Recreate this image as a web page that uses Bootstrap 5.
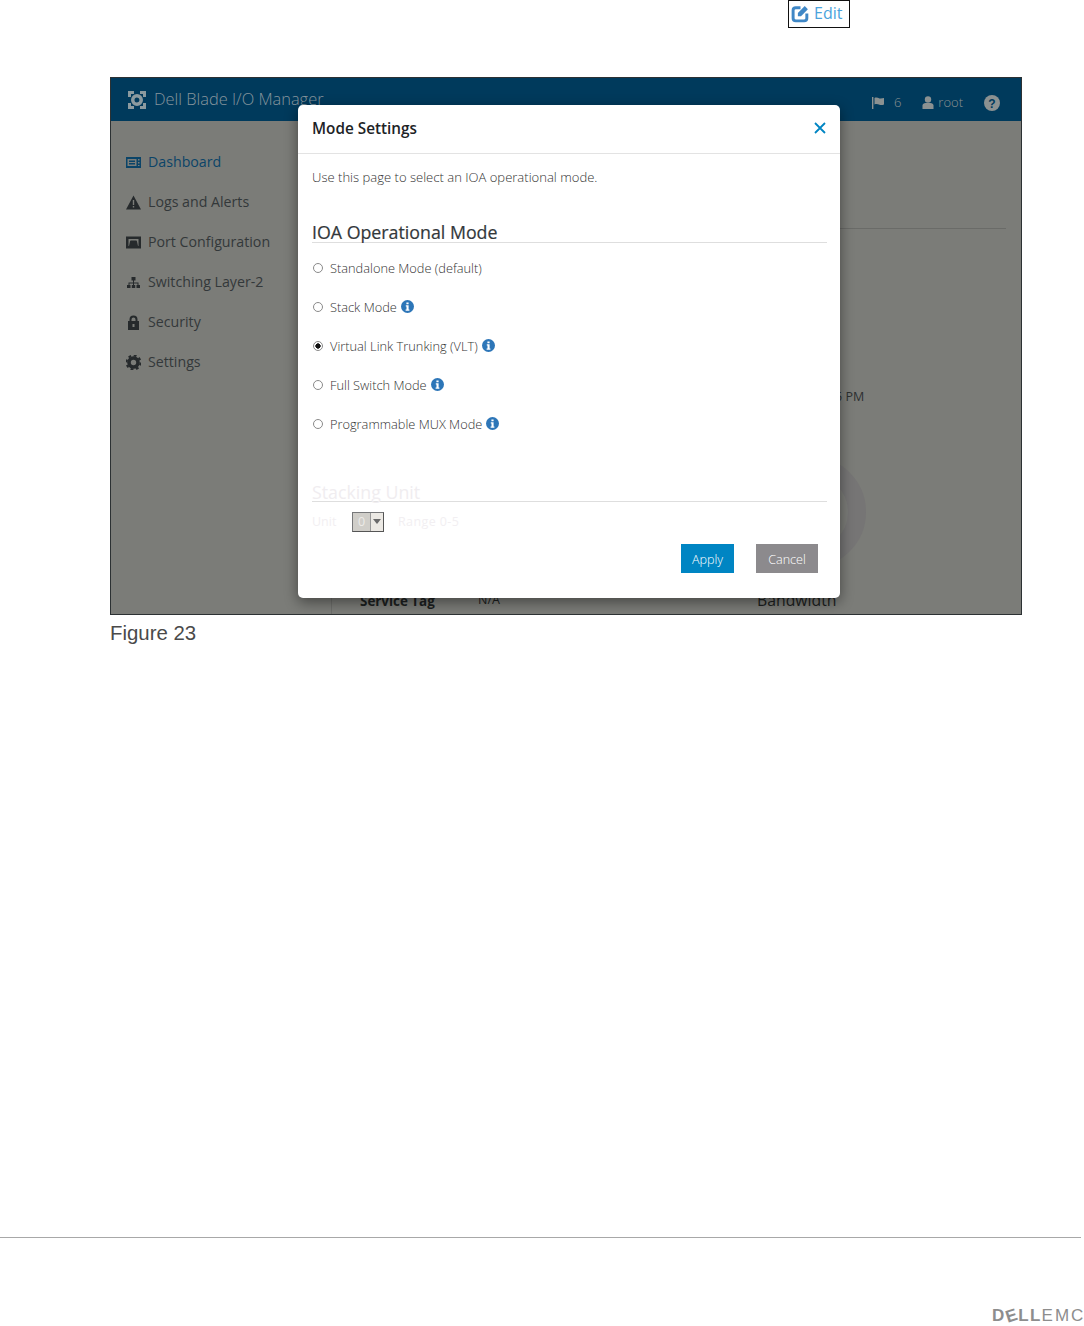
<!DOCTYPE html>
<html lang="en">
<head>
    <meta charset="UTF-8">
    <meta name="viewport" content="width=device-width, initial-scale=1.0">
    <title>Mode Settings</title>
    <link href="https://cdn.jsdelivr.net/npm/bootstrap@5.3.0/dist/css/bootstrap.min.css" rel="stylesheet">
    <style>
        body {
            background: #fff;
            font-family: "Open Sans", "Liberation Sans", sans-serif;
            font-size: 12px;
            font-weight: 300;
            color: #444;
        }
        .doc-page { height: 1326px; overflow: hidden; }

        /* top of the page, cropped edit button */
        .edit-row { height: 77px; padding-left: 788px; }
        .edit-box {
            width: 62px; height: 28px;
            border: 1px solid #111;
            color: #4aa3dc;
            font-size: 16px;
            font-weight: 400;
            gap: 4px;
            padding: 0 0 2px 2px;
        }

        /* screenshot figure */
        .shot {
            position: relative;
            margin-left: 110px;
            width: 912px; height: 538px;
            border: 1px solid #2c3133;
            background: #7b7c78;
            overflow: hidden;
        }
        .shot-head {
            height: 43px;
            background: #003a5c;
            color: #86959c;
            padding: 0 21px 0 17px;
        }
        .shot-title { font-size: 16.4px; margin-left: 8px; }
        .shot-tools { gap: 21px; font-size: 13px; color: #8b9191; padding-top: 6px; }
        .shot-body { height: 494px; }
        .side-col {
            width: 221px;
            border-right: 1px solid #6d6e6b;
            padding-top: 21px;
        }
        .side-item {
            height: 40px;
            padding-left: 15px;
            gap: 7px;
            font-size: 14.2px;
            font-weight: 400;
            color: #33383a;
        }
        .side-item.now { color: #0b4468; }
        .side-item svg { width: 15px; height: 15px; flex: none; }
        .main-col { position: relative; flex: 1; padding: 107px 15px 0 0; color: #2d3031; font-weight: 400; }
        .main-rule { border-top: 1px solid #6a6b68; margin-bottom: 159px; }
        .main-time { padding-left: 503px; font-size: 12.5px; }
        .ring {
            position: absolute; left: 422px; top: 335px;
            width: 112px; height: 112px;
            border-radius: 50%;
            border: 18px solid #767575;
        }
        .main-low {
            position: absolute; left: 28px; right: 0; top: 468px;
            font-size: 13.5px; color: #1c1f20;
        }
        .main-tag { width: 118px; font-weight: 700; font-size: 13.4px; }
        .main-na { width: 279px; font-size: 12.5px; }
        .main-band { font-size: 15.8px; }

        /* modal over the screenshot */
        .mode-box {
            position: absolute; left: 187px; top: 27px;
            width: 542px; height: 493px;
            background: #fff;
            border-radius: 5px;
            box-shadow: 0 4px 14px rgba(0, 0, 0, .45);
        }
        .mode-head {
            height: 49px;
            padding: 0 14px 2px;
            border-bottom: 1px solid #e3e3e3;
        }
        .mode-title { font-size: 15.3px; font-weight: 600; color: #1d2326; padding-top: 1px; }
        .mode-close { width: 12px; height: 12px; }
        .mode-body { padding: 15px 13px 0 14px; color: #4b4d50; font-weight: 400; }
        .mode-intro { margin: 0 0 37px; font-size: 13.05px; line-height: 16px; font-weight: 300; color: #333; }
        .mode-sec {
            font-size: 17.8px;
            line-height: 20px;
            height: 21px;
            margin: 0;
            color: #33383b;
            font-weight: 400;
            border-bottom: 1px solid #dedede;
            -webkit-text-stroke: .2px #33383b;
        }
        .mode-opts { margin-top: 6px; height: 232px; }
        .mode-opt { height: 39px; gap: 7px; font-size: 12.8px; font-weight: 300; color: #333; padding-left: 1px; }
        .mode-opt > span { padding-top: 1px; }
        .mode-opt .form-check-input {
            width: 10px; height: 10px; margin: 0 0 2px;
            flex: none;
            border: 1px solid #8a8a8a;
            background-color: #fff;
            background-image: none;
        }
        .mode-opt .form-check-input:checked {
            background-color: #fff;
            border-color: #8a8a8a;
            background-image: radial-gradient(circle, #111 0 2.4px, transparent 2.9px);
        }
        .info-dot { width: 13px; height: 13px; flex: none; margin-left: -3px; margin-bottom: 2px; }
        .mode-sec.stack-sec { color: #f0edf0; -webkit-text-stroke: 0; padding-top: 1px; }
        .stack-row { height: 30px; margin-top: 5px; color: #f2eff2; font-size: 12.5px; }
        .stack-unit { width: 40px; }
        .stack-sel {
            width: 32px; height: 20px;
            background: #d0cec9;
            border: 1px solid #77787a;
            border-right-color: #555; border-bottom-color: #555;
            color: #ecebe8;
            padding-left: 5px;
            margin-right: 14px;
            line-height: 18px;
            position: relative;
        }
        .stack-arrow {
            position: absolute; right: 0; top: 0;
            width: 13px; height: 18px;
            background: #ece9e4;
            border-left: 1px solid #999;
        }
        .stack-arrow::after {
            content: "";
            position: absolute; left: 2px; top: 6px;
            border: 4px solid transparent;
            border-top: 5px solid #6a6a6a;
        }
        .stack-range { letter-spacing: .4px; }
        .mode-btns { margin-top: 7px; padding-right: 9px; gap: 22px; }
        .mode-btn {
            height: 29px; border: 0; border-radius: 0;
            font-size: 12.6px; font-weight: 300; color: #fff; padding: 3px 0 0;
        }
        .mode-apply { width: 53px; background: #0085c3; }
        .mode-cancel { width: 62px; background: #8c8a8d; }

        .shot-cap {
            margin: 6px 0 0 110px;
            font-family: "Liberation Sans", Arial, sans-serif;
            font-size: 20.4px;
            font-weight: 400;
            line-height: 24px;
            color: #4a4a4a;
        }

        /* footer */
        .doc-foot { height: 89px; border-top: 1px solid #a8a8a8; width: 1081px; position: relative; }
        .foot-logo {
            position: absolute; left: 992px; top: 71px;
            font-family: "Liberation Sans", Arial, sans-serif;
            font-size: 17px; line-height: 14px;
            color: #8d8d8d;
            white-space: nowrap;
        }
        .foot-logo b { font-weight: 700; letter-spacing: 1.3px; }
        .foot-logo i { font-style: normal; font-weight: 700; line-height: 12px; display: inline-block; transform: rotate(-18deg); }
        .foot-logo span { font-weight: 400; letter-spacing: 2px; }
    </style>
</head>
<body>
<div class="doc-page d-flex flex-column">
    <div class="edit-row flex-none">
        <div class="edit-box d-flex align-items-center">
            <svg width="19" height="19" viewBox="0 0 18 18" fill="none">
                <path d="M9 3.500H4.500A2.500 2.500 0 0 0 2 6v7.500A2.500 2.500 0 0 0 4.500 16h8a2.500 2.500 0 0 0 2.500-2.500V9" stroke="#3f87c6" stroke-width="2.800"/>
                <path d="M6.500 8.500 13 2l3 3-6.500 6.500h-3z" fill="#3f87c6"/>
            </svg>
            <span>Edit</span>
        </div>
    </div>

    <div class="shot">
        <div class="shot-head d-flex align-items-center">
            <svg width="18" height="18" viewBox="0 0 18 18" fill="#8b9a9f">
                <path d="M0 0h6v3H3v3H0zM12 0h6v6h-3V3h-3zM0 12h3v3h3v3H0zM15 12h3v6h-6v-3h3z"/>
                <path fill-rule="evenodd" d="M9 3a6 6 0 1 1 0 12A6 6 0 0 1 9 3zm0 3.500a2.500 2.500 0 1 0 0 5 2.500 2.500 0 0 0 0-5z"/>
            </svg>
            <span class="shot-title">Dell Blade I/O Manager</span>
            <div class="shot-tools d-flex align-items-center ms-auto">
                <span class="d-flex align-items-center gap-2">
                    <svg width="14" height="12" viewBox="0 0 14 12" fill="#8b9191"><path d="M0 0h1.400v12H0zM2.500 1c2-1 3.500 0 5 .4 1.500.3 3 0 4.500-.4v6.500c-1.500.6-3 .8-4.500.3S4.500 6.500 2.500 7.500z"/></svg>
                    <span>6</span>
                </span>
                <span class="d-flex align-items-center gap-1">
                    <svg width="12" height="13" viewBox="0 0 12 13" fill="#8b9191"><circle cx="6" cy="3.500" r="3.200"/><path d="M.5 13V9.500C.5 8 2 7 3.500 7h5C10 7 11.500 8 11.500 9.500V13z"/></svg>
                    <span>root</span>
                </span>
                <svg width="16" height="16" viewBox="0 0 16 16"><circle cx="8" cy="8" r="8" fill="#8b9191"/><text x="8" y="12.500" text-anchor="middle" font-family="Liberation Sans, sans-serif" font-size="12" font-weight="700" fill="#003a5c">?</text></svg>
            </div>
        </div>
        <div class="shot-body d-flex">
            <div class="side-col">
                <div class="side-item now d-flex align-items-center">
                    <svg viewBox="0 0 15 15" fill="#0b4468"><path fill-rule="evenodd" d="M0 2h15v11H0zM1.500 4v7h9V4zM12 4v1.500h1.500V4zM12 7v1.500h1.500V7zM12 10v1h1.500v-1z"/><path d="M3 5.500h6V7H3zM3 8h6v1.500H3z"/></svg>
                    <span>Dashboard</span>
                </div>
                <div class="side-item d-flex align-items-center">
                    <svg viewBox="0 0 15 15" fill="#262a2c"><path fill-rule="evenodd" d="M7.500 0.500 15 14.500H0zM6.800 5v5h1.400V5zM6.800 11v1.500h1.400V11z"/></svg>
                    <span>Logs and Alerts</span>
                </div>
                <div class="side-item d-flex align-items-center">
                    <svg viewBox="0 0 15 15" fill="#262a2c"><path fill-rule="evenodd" d="M0 1.500h15v12H0zM2.500 4v7h10V4z"/><path d="M3 11h9L11 6.500Q11 5.500 10 5.500H5Q4 5.500 4 6.500z"/></svg>
                    <span>Port Configuration</span>
                </div>
                <div class="side-item d-flex align-items-center">
                    <svg viewBox="0 0 15 15" fill="#262a2c"><path d="M5.500 2h4v3.500h-4zM7 5h1v2.500h4.500V10h-1V8.500H8V10H7V8.500H3.500V10h-1V7.500H7z"/><path d="M1 10h3.500v3H1zM5.800 10h3.400v3H5.800zM10.500 10H14v3h-3.500z"/></svg>
                    <span>Switching Layer-2</span>
                </div>
                <div class="side-item d-flex align-items-center">
                    <svg viewBox="0 0 15 15" fill="#262a2c"><path fill-rule="evenodd" d="M3.500 6V4.500a4 4 0 0 1 8 0V6H13v9H2V6zM5.500 6h4V4.500a2 2 0 0 0-4 0zM6.500 9v3h2V9z"/></svg>
                    <span>Security</span>
                </div>
                <div class="side-item d-flex align-items-center">
                    <svg viewBox="0 0 15 15"><circle cx="7.500" cy="7.500" r="4.500" fill="none" stroke="#262a2c" stroke-width="3.600"/><circle cx="7.500" cy="7.500" r="7" fill="none" stroke="#262a2c" stroke-width="2" stroke-dasharray="2.800 2.700"/></svg>
                    <span>Settings</span>
                </div>
            </div>
            <div class="main-col">
                <div class="main-rule"></div>
                <div class="main-time">5 PM</div>
                <div class="ring"></div>
                <div class="main-low d-flex align-items-center">
                    <span class="main-tag">Service Tag</span>
                    <span class="main-na">N/A</span>
                    <span class="main-band">Bandwidth</span>
                </div>
            </div>
        </div>

        <div class="mode-box">
            <div class="mode-head d-flex align-items-center justify-content-between">
                <span class="mode-title">Mode Settings</span>
                <svg class="mode-close" viewBox="0 0 12 12" stroke="#0085c3" stroke-width="1.800"><path d="M1 1l10 10M11 1 1 11"/></svg>
            </div>
            <div class="mode-body">
                <p class="mode-intro">Use this page to select an IOA operational mode.</p>
                <h5 class="mode-sec">IOA Operational Mode</h5>
                <div class="mode-opts">
                    <label class="mode-opt d-flex align-items-center">
                        <input class="form-check-input" type="radio" name="iom"><span>Standalone Mode (default)</span>
                    </label>
                    <label class="mode-opt d-flex align-items-center">
                        <input class="form-check-input" type="radio" name="iom"><span>Stack Mode</span>
                        <svg class="info-dot" viewBox="0 0 13 13"><circle cx="6.500" cy="6.500" r="6.500" fill="#2d76b8"/><path d="M5.400 2.400h2.200v1.900H5.400zM4.800 5.200h2.800v4.200h.8v1.300H4.600V9.400h.9V6.500h-.7z" fill="#fff"/></svg>
                    </label>
                    <label class="mode-opt d-flex align-items-center">
                        <input class="form-check-input" type="radio" name="iom" checked><span>Virtual Link Trunking (VLT)</span>
                        <svg class="info-dot" viewBox="0 0 13 13"><circle cx="6.500" cy="6.500" r="6.500" fill="#2d76b8"/><path d="M5.400 2.400h2.200v1.900H5.400zM4.800 5.200h2.800v4.200h.8v1.300H4.600V9.400h.9V6.500h-.7z" fill="#fff"/></svg>
                    </label>
                    <label class="mode-opt d-flex align-items-center">
                        <input class="form-check-input" type="radio" name="iom"><span>Full Switch Mode</span>
                        <svg class="info-dot" viewBox="0 0 13 13"><circle cx="6.500" cy="6.500" r="6.500" fill="#2d76b8"/><path d="M5.400 2.400h2.200v1.900H5.400zM4.800 5.200h2.800v4.200h.8v1.300H4.600V9.400h.9V6.500h-.7z" fill="#fff"/></svg>
                    </label>
                    <label class="mode-opt d-flex align-items-center">
                        <input class="form-check-input" type="radio" name="iom"><span>Programmable MUX Mode</span>
                        <svg class="info-dot" viewBox="0 0 13 13"><circle cx="6.500" cy="6.500" r="6.500" fill="#2d76b8"/><path d="M5.400 2.400h2.200v1.900H5.400zM4.800 5.200h2.800v4.200h.8v1.300H4.600V9.400h.9V6.500h-.7z" fill="#fff"/></svg>
                    </label>
                </div>
                <h5 class="mode-sec stack-sec">Stacking Unit</h5>
                <div class="stack-row d-flex align-items-center">
                    <span class="stack-unit">Unit</span>
                    <span class="stack-sel">0<span class="stack-arrow"></span></span>
                    <span class="stack-range">Range 0-5</span>
                </div>
                <div class="mode-btns d-flex justify-content-end">
                    <button type="button" class="btn mode-btn mode-apply">Apply</button>
                    <button type="button" class="btn mode-btn mode-cancel">Cancel</button>
                </div>
            </div>
        </div>
    </div>
    <div class="shot-cap">Figure 23</div>

    <div class="doc-foot mt-auto">
        <div class="foot-logo"><b>D<i>E</i>LL</b><span>EMC</span></div>
    </div>
</div>
</body>
</html>
